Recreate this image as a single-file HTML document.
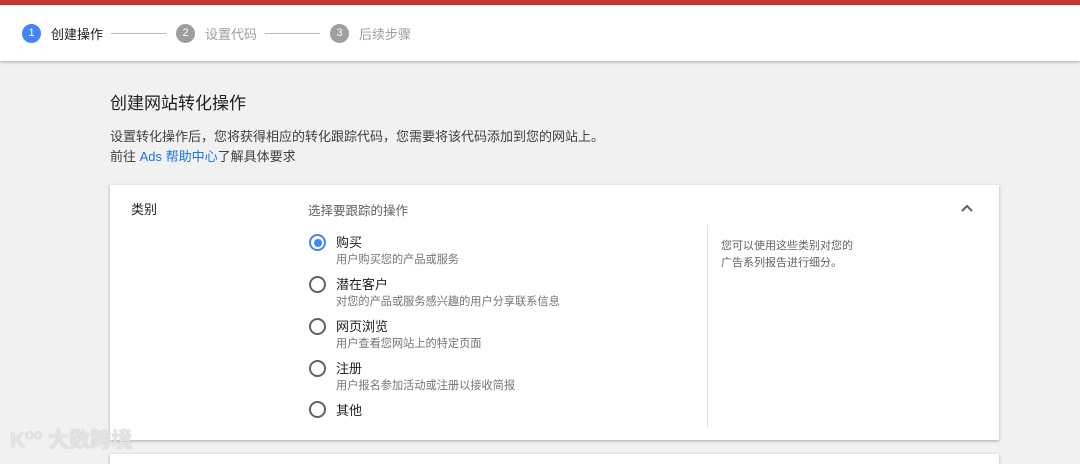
<!DOCTYPE html>
<html><head><meta charset="utf-8"><style>
*{margin:0;padding:0;box-sizing:border-box}
body{width:1080px;height:459px;overflow:hidden;background:#f1f1f1;font-family:"Liberation Sans","Noto Sans CJK SC",sans-serif;position:relative;color:#202124}
.red{position:absolute;left:0;top:0;width:1080px;height:5px;background:#c5392f}
.hdr{position:absolute;left:0;top:5px;width:1080px;height:56px;background:#fff;box-shadow:0 1px 3px rgba(0,0,0,.3)}
.step{position:absolute;top:19px;height:18px;display:flex;align-items:center;font-size:13px}
.num{width:19px;height:19px;border-radius:50%;color:#fff;font-size:11px;display:flex;align-items:center;justify-content:center;margin-right:10px}
.line{position:absolute;top:28px;height:1px;background:#bbb}
.t{position:absolute;white-space:nowrap}
.card{position:absolute;left:110px;top:185px;width:889px;height:255px;background:#fff;box-shadow:0 1px 3px rgba(0,0,0,.3)}
.radio{position:absolute;left:309px;width:17px;height:17px;border:2px solid #5f6368;border-radius:50%}
.radio.on{border-color:#4285f4}
.radio.on::after{content:"";position:absolute;left:2.5px;top:2.5px;width:8px;height:8px;border-radius:50%;background:#4285f4}
.lab{position:absolute;left:336px;font-size:13px;color:#202124}
.sub{position:absolute;left:336px;font-size:11.2px;color:#70757a}
</style></head><body>
<div class="red"></div>
<div class="hdr">
<div class="step" style="left:22px;top:19px"><div class="num" style="background:#4285f4">1</div><span style="color:#202124">创建操作</span></div>
<div class="line" style="left:111px;width:55px;top:28px"></div>
<div class="step" style="left:176px"><div class="num" style="background:#9e9e9e">2</div><span style="color:#9e9e9e">设置代码</span></div>
<div class="line" style="left:265px;width:55px"></div>
<div class="step" style="left:330px"><div class="num" style="background:#9e9e9e">3</div><span style="color:#9e9e9e">后续步骤</span></div>
</div>
<div class="t" style="left:110px;top:89px;font-size:17px;color:#202124">创建网站转化操作</div>
<div class="t" style="left:110px;top:126px;font-size:13px;color:#3c4043">设置转化操作后，您将获得相应的转化跟踪代码，您需要将该代码添加到您的网站上。</div>
<div class="t" style="left:110px;top:146px;font-size:13px;color:#3c4043">前往 <span style="color:#1a73e8">Ads 帮助中心</span>了解具体要求</div>
<div class="card"></div>
<div class="t" style="left:131px;top:199px;font-size:13px">类别</div>
<div class="t" style="left:308px;top:200px;font-size:12.5px;color:#5f6368">选择要跟踪的操作</div>
<svg style="position:absolute;left:960px;top:204px" width="14" height="10"><path d="M2 7 L7 2 L12 7" stroke="#5f6368" stroke-width="2" fill="none"/></svg>
<div style="position:absolute;left:707px;top:225px;width:1px;height:202px;background:#e0e0e0"></div>
<div class="t" style="left:721px;top:238px;font-size:11px;color:#5f6368;line-height:17px">您可以使用这些类别对您的<br>广告系列报告进行细分。</div>
<div class="radio on" style="top:234px"></div><div class="lab" style="top:232px">购买</div><div class="sub" style="top:251px">用户购买您的产品或服务</div>
<div class="radio" style="top:276px"></div><div class="lab" style="top:274px">潜在客户</div><div class="sub" style="top:293px">对您的产品或服务感兴趣的用户分享联系信息</div>
<div class="radio" style="top:318px"></div><div class="lab" style="top:316px">网页浏览</div><div class="sub" style="top:335px">用户查看您网站上的特定页面</div>
<div class="radio" style="top:360px"></div><div class="lab" style="top:358px">注册</div><div class="sub" style="top:377px">用户报名参加活动或注册以接收简报</div>
<div class="radio" style="top:401px"></div><div class="lab" style="top:400px">其他</div>
<div style="position:absolute;left:110px;top:454px;width:889px;height:10px;background:#fff;box-shadow:0 1px 3px rgba(0,0,0,.3)"></div>
<div class="t" style="left:10px;top:424px;font-size:21px;color:#e4e4e4;font-weight:bold;text-shadow:0 0 1px #aaa">K<sup style="font-size:11px">OO</sup> 大数跨境</div>
</body></html>
